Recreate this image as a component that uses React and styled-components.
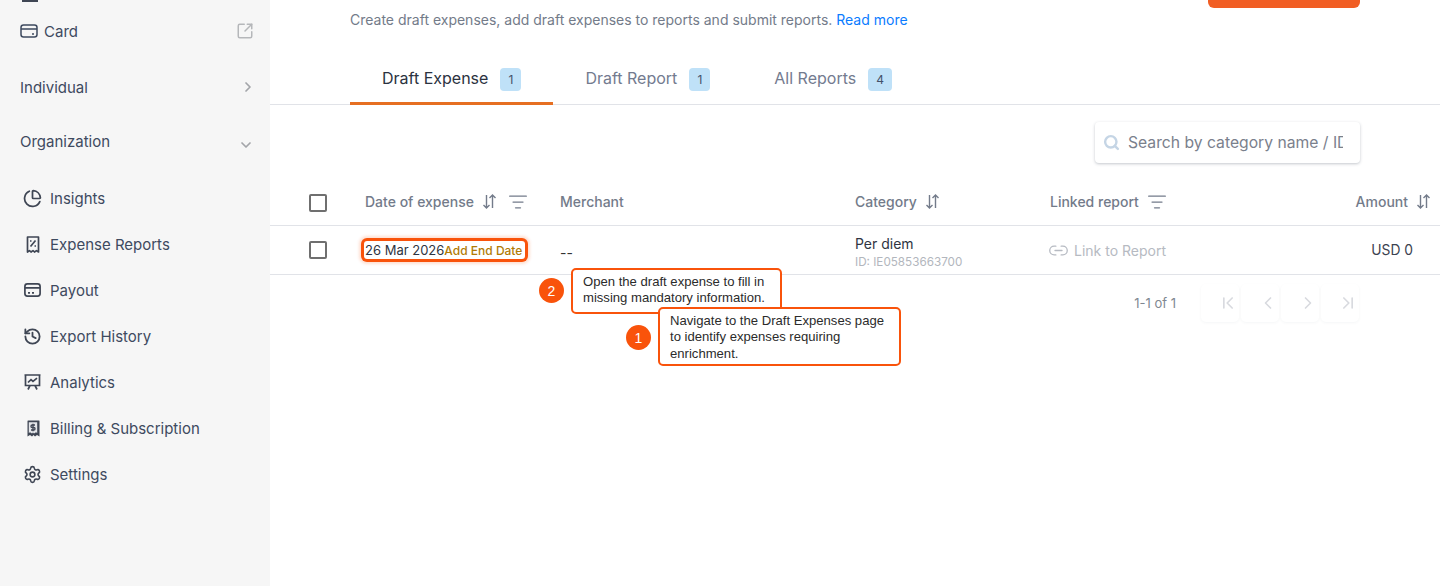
import React from 'react';
import styled, { createGlobalStyle } from 'styled-components';
import {
  ChartPie,
  ChevronDown,
  ChevronFirst,
  ChevronLast,
  ChevronLeft,
  ChevronRight,
  History,
  Link2,
  ListFilter,
  Search,
  Settings,
  SquareArrowOutUpRight,
} from 'lucide-react';

const GlobalStyle = createGlobalStyle`
  html, body {
    margin: 0;
    height: 586px;
    overflow: hidden;
    background: #fff;
    font-family: Inter, "Liberation Sans", sans-serif;
  }
`;

const Page = styled.div`
  display: flex;
  width: 1440px;
  height: 586px;
  overflow: hidden;
`;

const Sidebar = styled.aside`
  width: 270px;
  flex: none;
  background: #f6f6f6;
  padding: 0 14px 0 20px;
  box-sizing: border-box;
  color: #3e4a5f;
  font-size: 15px;
`;

const ClippedIcon = styled.div`
  width: 16px;
  height: 2px;
  margin-left: 2px;
  border-bottom: 2px solid #3f4654;
  box-sizing: border-box;
`;

const CardRow = styled.div`
  display: flex;
  align-items: center;
  gap: 6px;
  height: 24px;
  margin-top: 17px;
  padding-right: 2px;
`;

const SectionRow = styled.div`
  display: flex;
  align-items: center;
  justify-content: space-between;
  height: 24px;
  margin-top: ${(props) => props.$top}px;
  color: #a3a5a9;
`;

const SectionLabel = styled.span`
  color: #3e4a5f;
`;

const ExternalIcon = styled(SquareArrowOutUpRight)`
  color: #b5b7ba;
  flex: none;
`;

const OpenChevron = styled(ChevronDown)`
  margin: 7px 2px 0 0;
`;

const Grow = styled.span`
  flex: 1;
`;

const NavList = styled.nav`
  display: flex;
  flex-direction: column;
  gap: 22px;
  margin-top: 33px;
  padding-left: 4px;
`;

const NavItem = styled.div`
  display: flex;
  align-items: center;
  gap: 9px;
  height: 24px;
`;

const NavIcon = styled.span`
  display: flex;
  align-items: center;
  justify-content: center;
  width: 17px;
  height: 18px;
  color: #3f4654;

  svg {
    flex: none;
  }
`;

const Main = styled.main`
  position: relative;
  flex: 1;
  min-width: 0;
`;

const TopBar = styled.div`
  display: flex;
  justify-content: space-between;
  padding: 0 80px;
  height: 40px;
`;

const Description = styled.p`
  margin: 11px 0 0;
  font-size: 14px;
  line-height: 18px;
  color: #737b89;
`;

const ReadMore = styled.span`
  color: #0a7cff;
`;

const CreateButton = styled.div`
  width: 152px;
  height: 8px;
  background: #f15e24;
  border-radius: 0 0 6px 6px;
`;

const Tabs = styled.div`
  display: flex;
  height: 64px;
  padding-left: 80px;
  border-bottom: 1px solid #e1e3e8;
`;

const Tab = styled.div`
  display: flex;
  align-items: center;
  gap: 12px;
  height: 65px;
  padding: 14px 32px 0;
  box-sizing: border-box;
  font-size: 16px;
  color: ${(props) => (props.$active ? '#2b3240' : '#737b8f')};
  border-bottom: 3px solid ${(props) => (props.$active ? '#e66f22' : 'transparent')};
`;

const Badge = styled.span`
  display: flex;
  align-items: center;
  justify-content: center;
  width: ${(props) => props.$wide || 21}px;
  height: 23px;
  margin-top: 2px;
  border-radius: 4px;
  background: #bfe1f8;
  color: #435069;
  font-size: 12px;
`;

const SearchRow = styled.div`
  display: flex;
  justify-content: flex-end;
  padding: 17px 80px 0 0;
  height: 58px;
`;

const SearchBox = styled.div`
  display: flex;
  align-items: center;
  gap: 8px;
  width: 265px;
  height: 41px;
  padding: 0 17px 0 8px;
  box-sizing: border-box;
  border-radius: 4px;
  background: #fff;
  box-shadow: 0 1px 3px rgba(60, 70, 90, 0.3);
  color: #c5d5e5;
`;

const SearchText = styled.span`
  flex: 1;
  overflow: hidden;
  white-space: nowrap;
  font-size: 15.7px;
  color: #7a808c;
`;

const TableGrid = styled.div`
  display: grid;
  grid-template-columns: 56px 195px 295px 195px 1fr;
  align-items: center;
  padding-left: 39px;
  padding-right: 9px;
  border-bottom: 1px solid #e1e3e8;
  height: ${(props) => props.$height}px;
  box-sizing: border-box;
`;

const Checkbox = styled.span`
  display: block;
  width: 18px;
  height: 18px;
  box-sizing: border-box;
  border: 2px solid #6f6f6f;
  border-radius: 2px;
`;

const HeadCell = styled.div`
  display: flex;
  align-items: center;
  gap: 8px;
  padding-bottom: 2px;
  font-size: 14px;
  font-weight: 500;
  color: #737b8a;
`;

const SortGlyph = styled.svg`
  color: #737b8a;
  flex: none;
`;

const FilterIcon = styled(ListFilter)`
  color: #737b8a;
  flex: none;
  margin-left: ${(props) => props.$space}px;
`;

const DateCell = styled.div`
  display: flex;
  align-items: center;
  width: 161px;
  height: 18px;
  margin-left: -1px;
  padding-left: 1px;
  box-sizing: border-box;
  white-space: nowrap;
  font-size: 13px;
  color: #2f3542;
  border-radius: 3px;
  box-shadow: 0 0 0 3px #f9530b, 0 0 3px 5px rgba(249, 83, 11, 0.18);
`;

const AddEndDate = styled.span`
  font-size: 12px;
  font-weight: 500;
  color: #b17b05;
`;

const Dash = styled.div`
  padding-top: 5px;
  font-size: 14px;
  color: #333;
`;

const CategoryCell = styled.div`
  padding-top: 5px;
`;

const CategoryName = styled.div`
  font-size: 14px;
  line-height: 20px;
  color: #2f3542;
`;

const CategoryId = styled.div`
  font-size: 11.7px;
  line-height: 17px;
  color: #b2b6bd;
`;

const RowEnd = styled.div`
  display: flex;
  align-items: center;
  justify-content: space-between;
`;

const LinkCell = styled.div`
  display: flex;
  align-items: center;
  gap: 5px;
  margin-left: -2px;
  font-size: 14px;
  color: #b6bac2;
`;

const AmountCell = styled.div`
  padding-right: 18px;
  font-size: 13.8px;
  color: #3c4250;
`;

const Pager = styled.div`
  display: flex;
  justify-content: flex-end;
  align-items: center;
  gap: 24px;
  padding: 8px 80px 0 0;
`;

const PagerText = styled.span`
  font-size: 13px;
  color: #808791;
`;

const PagerButtons = styled.div`
  display: flex;
`;

const PagerButton = styled.span`
  display: flex;
  align-items: center;
  justify-content: center;
  width: 38px;
  height: 38px;
  margin: 1px;
  padding-left: 16px;
  box-sizing: border-box;
  border-radius: 5px;
  color: #d8dadf;
  box-shadow: 0 1px 3px rgba(60, 70, 90, 0.05);
`;

const Marker = styled.span`
  position: absolute;
  left: ${(props) => props.$x}px;
  top: ${(props) => props.$y}px;
  display: flex;
  align-items: center;
  justify-content: center;
  width: 25px;
  height: 25px;
  border-radius: 50%;
  background: #f9530b;
  color: #fff;
  font-family: "Liberation Sans", Arial, sans-serif;
  font-size: 14px;
`;

const Callout = styled.div`
  position: absolute;
  left: ${(props) => props.$x}px;
  top: ${(props) => props.$y}px;
  width: ${(props) => props.$w}px;
  height: ${(props) => props.$h}px;
  padding: ${(props) => props.$pad};
  box-sizing: border-box;
  background: #fff;
  border: 2px solid #f9530b;
  border-radius: 5px;
  font-family: "Liberation Sans", Arial, sans-serif;
  font-size: 13.1px;
  line-height: 16.3px;
  color: #2b2b2b;
`;

const CardIcon = () => (
  <svg width="18" height="18" viewBox="0 0 18 18" fill="none" stroke="currentColor" strokeWidth="1.5">
    <rect x="1" y="3" width="16" height="12" rx="2.5" />
    <path d="M1 7h16M12 12h2" />
  </svg>
);

const PercentReceipt = () => (
  <svg width="14" height="17" viewBox="0 0 14 17" fill="none" stroke="currentColor" strokeWidth="1.7">
    <path d="M1.500 1h11v15l-2-1.400-2 1.400-1.500-1.400L5 16l-1.500-1.400-2 1.400z" strokeLinejoin="round" />
    <path d="M9.500 4.500l-5 6" />
    <path d="M4 5h1.500M8.500 10h1.500" />
  </svg>
);

const PayoutIcon = () => (
  <svg width="17" height="14" viewBox="0 0 17 14" fill="none" stroke="currentColor" strokeWidth="1.7">
    <rect x="0.900" y="0.900" width="15.200" height="12.200" rx="2.500" />
    <path d="M1 4.800h15M4 9.800h2M8 9.800h2" />
  </svg>
);

const BoardIcon = () => (
  <svg width="17" height="16" viewBox="0 0 17 16" fill="none" stroke="currentColor" strokeWidth="1.7">
    <path d="M0.500 1h16M1.500 1v10.500h14V1M6 11.500l-2 4M11 11.500l2 4" />
    <path d="M4 8.500l3-2.800 2 1.800 4-3.300" />
  </svg>
);

const BillingIcon = () => (
  <svg width="14" height="17" viewBox="0 0 14 17">
    <path
      fill="currentColor"
      d="M1 .5h12a.5.5 0 0 1 .5.5v15.500l-2.500-1.500-2 1.500-1.500-1.500-1.500 1.500-2-1.500-2.500 1.500V1a.5.5 0 0 1 .5-.5z"
    />
    <path fill="#e4e6ea" d="M2.800 2.300h8.400v10.600l-1.200-.6-2 1.200-1-1-1 1-2-1.200-1.200.6z" />
    <path d="M9 5H6.200a1.200 1.200 0 0 0 0 2.500h1.600a1.200 1.200 0 0 1 0 2.500H5M7 3.800v7.400" fill="none" stroke="currentColor" strokeWidth="1.300" />
  </svg>
);

const SortIcon = () => (
  <SortGlyph width="15" height="15" viewBox="0 0 15 15" fill="none" stroke="currentColor" strokeWidth="1.4">
    <path d="M4.500 1v13M1.500 11l3 3 3-3" />
    <path d="M10.500 14V1M7.500 4l3-3 3 3" />
  </SortGlyph>
);

const navItems = [
  { label: 'Insights', icon: <ChartPie size={19} strokeWidth={2.2} /> },
  { label: 'Expense Reports', icon: <PercentReceipt /> },
  { label: 'Payout', icon: <PayoutIcon /> },
  { label: 'Export History', icon: <History size={19} strokeWidth={2.3} /> },
  { label: 'Analytics', icon: <BoardIcon /> },
  { label: 'Billing & Subscription', icon: <BillingIcon /> },
  { label: 'Settings', icon: <Settings size={19} strokeWidth={2} /> },
];

const App = () => {
  return (
    <Page>
      <GlobalStyle />
      <Sidebar>
        <ClippedIcon />
        <CardRow>
          <CardIcon />
          <span>Card</span>
          <Grow />
          <ExternalIcon size={18} strokeWidth={2} />
        </CardRow>
        <SectionRow $top={32}>
          <SectionLabel>Individual</SectionLabel>
          <ChevronRight size={16} strokeWidth={2.6} />
        </SectionRow>
        <SectionRow $top={30}>
          <SectionLabel>Organization</SectionLabel>
          <OpenChevron size={16} strokeWidth={2.6} />
        </SectionRow>
        <NavList>
          {navItems.map((item) => (
            <NavItem key={item.label}>
              <NavIcon>{item.icon}</NavIcon>
              <span>{item.label}</span>
            </NavItem>
          ))}
        </NavList>
      </Sidebar>
      <Main>
        <TopBar>
          <Description>
            Create draft expenses, add draft expenses to reports and submit reports. <ReadMore>Read more</ReadMore>
          </Description>
          <CreateButton />
        </TopBar>
        <Tabs>
          <Tab $active>
            Draft Expense <Badge>1</Badge>
          </Tab>
          <Tab>
            Draft Report <Badge>1</Badge>
          </Tab>
          <Tab>
            All Reports <Badge $wide={24}>4</Badge>
          </Tab>
        </Tabs>
        <SearchRow>
          <SearchBox>
            <Search size={17} strokeWidth={3.4} />
            <SearchText>Search by category name / ID</SearchText>
          </SearchBox>
        </SearchRow>
        <TableGrid $height={46}>
          <Checkbox />
          <HeadCell>
            Date of expense <SortIcon /> <FilterIcon $space={3} size={20} strokeWidth={1.5} />
          </HeadCell>
          <HeadCell>Merchant</HeadCell>
          <HeadCell>
            Category <SortIcon />
          </HeadCell>
          <HeadCell>
            <span>Linked report</span>
            <FilterIcon $space={0} size={20} strokeWidth={1.5} />
            <Grow />
            <span>Amount</span>
            <SortIcon />
          </HeadCell>
        </TableGrid>
        <TableGrid $height={49}>
          <Checkbox />
          <DateCell>
            26 Mar 2026<AddEndDate>Add End Date</AddEndDate>
          </DateCell>
          <Dash>--</Dash>
          <CategoryCell>
            <CategoryName>Per diem</CategoryName>
            <CategoryId>ID: IE05853663700</CategoryId>
          </CategoryCell>
          <RowEnd>
            <LinkCell>
              <Link2 size={21} strokeWidth={1.5} /> Link to Report
            </LinkCell>
            <AmountCell>USD 0</AmountCell>
          </RowEnd>
        </TableGrid>
        <Pager>
          <PagerText>1-1 of 1</PagerText>
          <PagerButtons>
            <PagerButton><ChevronFirst size={20} /></PagerButton>
            <PagerButton><ChevronLeft size={20} /></PagerButton>
            <PagerButton><ChevronRight size={20} /></PagerButton>
            <PagerButton><ChevronLast size={20} /></PagerButton>
          </PagerButtons>
        </Pager>
        <Marker $x={269} $y={278}>2</Marker>
        <Callout $x={301} $y={268} $w={211} $h={46} $pad="4px 10px">
          Open the draft expense to fill in missing mandatory information.
        </Callout>
        <Marker $x={356} $y={325}>1</Marker>
        <Callout $x={388} $y={307} $w={243} $h={59} $pad="4px 10px">
          Navigate to the Draft Expenses page to identify expenses requiring enrichment.
        </Callout>
      </Main>
    </Page>
  );
};

export default App;
